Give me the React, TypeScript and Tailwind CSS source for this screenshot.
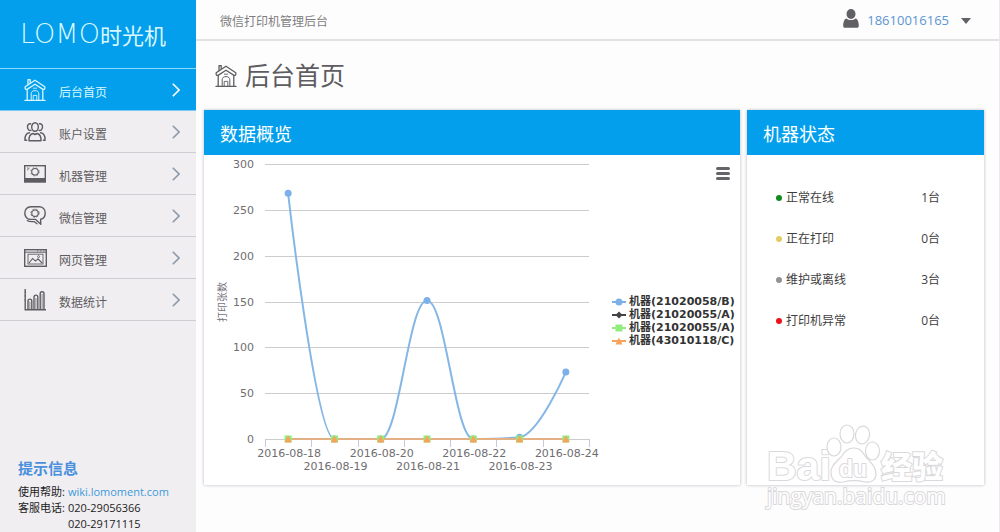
import type { ReactNode } from "react";

type IconProps = { className?: string };

function HomeIcon({ className }: IconProps) {
  return (
    <svg viewBox="0 0 22 24" fill="none" stroke="currentColor" strokeWidth={1.3} strokeLinejoin="round" strokeLinecap="round" className={className}>
      <path d="M4 6.5V1.6h2.2v3" />
      <path d="M11 2.2 1.2 8.8c-.4 1.6.3 2.8 1.8 2.6L11 6.2l8 5.2c1.5.2 2.2-1 1.8-2.6Z" />
      <path d="M3.2 12v10M18.8 12v10M1 22.4h20" />
      <path d="M7.2 22v-6.2c0-2 1.4-3.2 3.8-3.2s3.8 1.2 3.8 3.2V22" strokeWidth={1} />
      <path d="M9.2 22v-4.6h3.6V22M9.4 10.2h3.2" strokeWidth={0.9} />
    </svg>
  );
}

function UsersIcon({ className }: IconProps) {
  return (
    <svg viewBox="0 0 22 20" fill="none" stroke="currentColor" strokeWidth={1.4} strokeLinecap="round" strokeLinejoin="round" className={className}>
      <ellipse cx="11" cy="5" rx="3.3" ry="4.2" />
      <path d="M6.6 1.8C4.6 1.4 3.4 3 3.5 5c.1 2.2 1.6 3.8 3.5 3.4M15.4 1.8c2-.4 3.2 1.2 3.1 3.2-.1 2.2-1.6 3.8-3.5 3.4" />
      <path d="M5 18.8c-.2-4.2 1.4-6.8 4-7.3l2 1 2-1c2.6.5 4.2 3.1 4 7.3Z" />
      <path d="M5.4 10.8C2.4 11.2.8 13.8.9 18.2h1.8M16.6 10.8c3 .4 4.6 3 4.5 7.4h-1.8" />
    </svg>
  );
}

function MachineIcon({ className }: IconProps) {
  return (
    <svg viewBox="0 0 22 18" fill="none" stroke="currentColor" className={className}>
      <rect x=".7" y=".7" width="20.6" height="16.3" strokeWidth={1.4} />
      <rect x="1" y="13" width="20" height="4" fill="currentColor" stroke="none" />
      <circle cx="11" cy="6.8" r="3.3" strokeWidth={1.1} />
      <circle cx="11" cy="6.8" r="4.2" strokeWidth={0.8} strokeDasharray="1.4 2" />
      <path d="M3 5.2 5.600 3M3 3h1.500" strokeWidth={0.8} />
    </svg>
  );
}

function WechatIcon({ className }: IconProps) {
  return (
    <svg viewBox="0 0 22 20" fill="none" stroke="currentColor" strokeLinejoin="round" strokeLinecap="round" className={className}>
      <path d="M7 .8h8c3.8 0 6.2 2.600 6.200 6.200 0 3.400-2 5.800-4.600 6.300l.2 5-5.200-4.900H7C3.200 13.400.8 10.800.8 7.200.8 3.400 3.200.8 7 .8Z" strokeWidth={1.4} />
      <path d="M3.2 14.600c2.600 1.600 5 1 6.800 1l3 2.200" strokeWidth={1.2} />
      <circle cx="11" cy="7.2" r="3.2" strokeWidth={1.1} />
      <circle cx="11" cy="7.2" r="4.1" strokeWidth={0.8} strokeDasharray="1.3 2" />
    </svg>
  );
}

function WebIcon({ className }: IconProps) {
  return (
    <svg viewBox="0 0 23 18" fill="none" stroke="currentColor" className={className}>
      <rect x=".7" y=".7" width="21.6" height="16.6" strokeWidth={1.4} />
      <path d="M1 3.2h21" strokeWidth={1} />
      <path d="M13 2h1.500M16 2h1.500M19 2h1.500" strokeWidth={0.8} />
      <rect x="4" y="5.2" width="15" height="9.8" strokeWidth={0.9} />
      <path d="m5 14 3.600-4.500 3 2.600L14 9.800l4 4.200" strokeWidth={1.1} />
      <circle cx="14.6" cy="7.6" r="1" strokeWidth={0.8} />
    </svg>
  );
}

function StatsIcon({ className }: IconProps) {
  return (
    <svg viewBox="0 0 22 22" fill="none" stroke="currentColor" strokeWidth={1.4} className={className}>
      <path d="M1.200 0v20.800H22" />
      <path d="M.4 3h1.600M.4 7h1.600M.4 11h1.600" strokeWidth={0.8} />
      <path d="M4 20.500V12a1.900 1.900 0 0 1 3.800 0v8.500M10 20.500V8a1.900 1.900 0 0 1 3.800 0v12.500M16.200 20.500V4.600a1.900 1.900 0 0 1 3.800 0v15.900" />
      <path d="M5.900 12.500v8M11.900 9v11.500M18.100 5v15.500" strokeWidth={0.7} />
    </svg>
  );
}

function Chevron() {
  return (
    <svg viewBox="0 0 8 14" fill="none" stroke="currentColor" strokeWidth={1.6} className="h-3.5 w-2">
      <path d="m.8.8 6.200 6.200-6.200 6.200" />
    </svg>
  );
}

const navItems = [
  { label: "后台首页", icon: <HomeIcon className="h-6 w-[22px]" />, active: true },
  { label: "账户设置", icon: <UsersIcon className="h-5 w-[22px]" /> },
  { label: "机器管理", icon: <MachineIcon className="h-[18px] w-[22px]" /> },
  { label: "微信管理", icon: <WechatIcon className="h-5 w-[22px]" /> },
  { label: "网页管理", icon: <WebIcon className="h-[18px] w-[23px]" /> },
  { label: "数据统计", icon: <StatsIcon className="h-[22px] w-[22px]" /> },
];

function Sidebar() {
  return (
    <aside className="flex min-h-screen w-[196px] shrink-0 flex-col bg-[#f0eef1]">
      <div className="flex h-[69px] items-center border-b border-[#8ddcfb] bg-[#049fec] pl-5 text-[#d9f7ff]">
        <span className="font-['DejaVu_Sans',sans-serif] text-[27px] font-extralight">LOMO</span>
        <span className="font-['Noto_Sans_CJK_SC',sans-serif] text-[22px]">时光机</span>
      </div>
      <nav>
        {navItems.map((item) => (
          <a
            key={item.label}
            href="#"
            className={
              item.active
                ? "flex h-[42px] items-center border-b border-[#7cc8ee] bg-[#049fec] pr-4 pl-6 text-[#d9f7ff]"
                : "flex h-[42px] items-center border-b border-[#cfcdd1] pr-4 pl-6 text-[#5e5c60]"
            }
          >
            <span className="w-[35px]">{item.icon}</span>
            <span className="flex-1 pt-1.5 text-[12px]">{item.label}</span>
            <span className={item.active ? "text-white" : "text-[#8c99a8]"}>
              <Chevron />
            </span>
          </a>
        ))}
      </nav>

      <div className="mt-auto pl-[18px] text-[#222]">
        <h2 className="mb-1.5 text-[15px] leading-5 font-bold text-[#4a90dd]">提示信息</h2>
        <dl className="grid grid-cols-[auto_1fr] gap-x-[3px] text-[11px] leading-4">
          <dt>使用帮助:</dt>
          <dd>
            <a href="http://wiki.lomoment.com" className="text-[#3c9bdc]">wiki.lomoment.com</a>
          </dd>
          <dt>客服电话:</dt>
          <dd>
            020-29056366
            <br />
            020-29171115
          </dd>
        </dl>
      </div>
    </aside>
  );
}

const days = ["2016-08-18", "2016-08-19", "2016-08-20", "2016-08-21", "2016-08-22", "2016-08-23", "2016-08-24"];
const prints = [268, 0, 0, 151, 0, 2, 73];
const yTicks = [0, 50, 100, 150, 200, 250, 300];

const LEFT = 61;
const RIGHT = 385;
const TOP = 9;
const BOTTOM = 284;
const STEP = (RIGHT - LEFT) / days.length;

const xAt = (i: number) => LEFT + STEP * (i + 0.5);
const yAt = (v: number) => BOTTOM - (v / 300) * (BOTTOM - TOP);

// Smoothed line whose control points never overshoot the neighbouring values
function spline(values: number[]) {
  const pts = values.map((v, i) => ({ x: xAt(i), y: yAt(v) }));
  let d = `M${pts[0].x} ${pts[0].y}`;
  let out = pts[0];
  for (let i = 1; i < pts.length; i++) {
    const prev = pts[i - 1];
    const cur = pts[i];
    const next = pts[i + 1];
    let left = cur;
    let right = cur;
    if (next) {
      left = { x: (1.5 * cur.x + prev.x) / 2.5, y: (1.5 * cur.y + prev.y) / 2.5 };
      right = { x: (1.5 * cur.x + next.x) / 2.5, y: (1.5 * cur.y + next.y) / 2.5 };
      const fix = ((right.y - left.y) * (right.x - cur.x)) / (right.x - left.x) + cur.y - right.y;
      left.y += fix;
      right.y += fix;
      const lo = Math.min(prev.y, cur.y);
      const hi = Math.max(prev.y, cur.y);
      left.y = Math.min(hi, Math.max(lo, left.y));
      right.y = 2 * cur.y - left.y;
      const nlo = Math.min(next.y, cur.y);
      const nhi = Math.max(next.y, cur.y);
      right.y = Math.min(nhi, Math.max(nlo, right.y));
      left.y = 2 * cur.y - right.y;
    }
    d += ` C${out.x} ${out.y} ${left.x} ${left.y} ${cur.x} ${cur.y}`;
    out = right;
  }
  return d;
}

function PrintChart() {
  return (
    <svg viewBox="0 0 400 330" className="block min-w-0 flex-1 font-['DejaVu_Sans','Noto_Sans_CJK_SC',sans-serif]">
      {yTicks.map((v) => (
        <g key={v}>
          <line x1={LEFT} x2={RIGHT} y1={Math.round(yAt(v)) + 0.5} y2={Math.round(yAt(v)) + 0.5} stroke="#cccccf" />
          <text x="50" y={yAt(v) + 4} textAnchor="end" fontSize="11" fill="#6f6d70">{v}</text>
        </g>
      ))}
      {[0, 1, 2, 3, 4, 5, 6, 7].map((i) => (
        <line key={i} x1={Math.round(LEFT + STEP * i) + 0.5} x2={Math.round(LEFT + STEP * i) + 0.5} y1={BOTTOM} y2={BOTTOM + 8} stroke="#c3ccd8" />
      ))}
      {days.map((day, i) => (
        <text key={day} x={xAt(i) + 1} y={i % 2 ? 315 : 302} textAnchor="middle" fontSize="11" fill="#6f6d70">{day}</text>
      ))}
      <text transform="translate(22 147) rotate(-90)" textAnchor="middle" fontSize="10" fill="#77717c">打印张数</text>

      <path d={spline(prints)} fill="none" stroke="#85b7e6" strokeWidth={2} />
      {prints.map((v, i) => (
        <circle key={i} cx={xAt(i)} cy={yAt(v)} r={3.5} fill="#7cb0e8" />
      ))}
      <line x1={xAt(0)} x2={xAt(6)} y1={BOTTOM} y2={BOTTOM} stroke="#e4b083" strokeWidth={2} />
      {days.map((day, i) => (
        <g key={day} transform={`translate(${xAt(i)} ${BOTTOM})`}>
          <rect x="-3.5" y="-3.5" width="7" height="7" fill="#90ed7d" />
          <path d="M0-3 3 3h-6Z" fill="#f7a35c" stroke="#f7a35c" />
        </g>
      ))}
    </svg>
  );
}

const series: { name: string; color: string; mark: ReactNode }[] = [
  { name: "机器(21020058/B)", color: "#7cb0e8", mark: <circle cx="7" cy="5" r="3.5" /> },
  { name: "机器(21020055/A)", color: "#434348", mark: <path d="M7 1.500 10.500 5 7 8.500 3.500 5Z" /> },
  { name: "机器(21020055/A)", color: "#90ed7d", mark: <path d="M3.500 1.500h7v7h-7Z" /> },
  { name: "机器(43010118/C)", color: "#f7a35c", mark: <path d="m7 1.500 3.500 7h-7Z" /> },
];

function OverviewPanel() {
  return (
    <section className="bg-white shadow-[0_0_3px_#b9b3bd]">
      <h2 className="flex h-[45px] items-center bg-[#049fec] px-4 pt-1 text-[18px] text-white">数据概览</h2>
      <div className="flex">
        <PrintChart />
        <div className="flex w-[136px] shrink-0 flex-col pr-2 pl-2">
          <button type="button" aria-label="图表菜单" className="mt-3 mr-0.5 flex flex-col gap-0.5 self-end">
            <span className="h-[3px] w-3.5 rounded-xs bg-[#666469]" />
            <span className="h-[3px] w-3.5 rounded-xs bg-[#666469]" />
            <span className="h-[3px] w-3.5 rounded-xs bg-[#666469]" />
          </button>
          <ul className="mt-[115px]">
            {series.map((s, i) => (
              <li key={i} className="h-[13px]">
                <button
                  type="button"
                  className="flex items-center gap-[3px] font-['DejaVu_Sans','Noto_Sans_CJK_SC',sans-serif] text-[11px] leading-[13px] font-bold whitespace-nowrap text-[#333]"
                >
                  <svg viewBox="0 0 14 10" fill={s.color} stroke="none" className="h-2.5 w-3.5">
                    <path d="M0 5h14" stroke={s.color} strokeWidth={2} />
                    {s.mark}
                  </svg>
                  {s.name}
                </button>
              </li>
            ))}
          </ul>
        </div>
      </div>
    </section>
  );
}

const statuses = [
  { label: "正常在线", count: "1台", dot: "bg-[#138a1c]" },
  { label: "正在打印", count: "0台", dot: "bg-[#e3cd63]" },
  { label: "维护或离线", count: "3台", dot: "bg-[#939196]" },
  { label: "打印机异常", count: "0台", dot: "bg-[#ee1216]" },
];

function StatusPanel() {
  return (
    <section className="bg-white shadow-[0_0_3px_#b9b3bd]">
      <h2 className="flex h-[45px] items-center bg-[#049fec] px-4 pt-1 text-[18px] text-white">机器状态</h2>
      <ul className="pt-[22px] pr-11 pl-[29px] text-[12px] text-[#3f3d40]">
        {statuses.map((s) => (
          <li key={s.label} className="flex h-[41px] items-center">
            <span className={`mr-1 size-1.5 rounded-full ${s.dot}`} />
            <span className="flex-1">{s.label}</span>
            <span>{s.count}</span>
          </li>
        ))}
      </ul>
    </section>
  );
}

function Watermark() {
  return (
    <svg viewBox="0 0 184 92" className="pointer-events-none absolute right-[51px] bottom-[20px] w-[184px]" fill="#fff" stroke="#dad8db" strokeWidth={1.2}>
      <g className="font-['Liberation_Sans',sans-serif]" strokeLinejoin="round">
        <text x="3" y="60" fontSize="41" fontWeight="700" strokeWidth="2" paintOrder="stroke">Bai</text>
        <ellipse cx="70" cy="27" rx="7" ry="9" />
        <ellipse cx="83" cy="14" rx="7" ry="9" />
        <ellipse cx="98.5" cy="15" rx="7" ry="9" transform="rotate(10 98.5 15)" />
        <ellipse cx="108.5" cy="31" rx="7" ry="9" />
        <path d="M90 28c-8 0-10 6-14 10-5 5-10 9-9 16 1 8 7 9 12 8 8-2 14-2 22 0 6 1 11-2 11-8 0-7-5-11-10-17-4-5-5-9-12-9Z" />
        <text x="75" y="57" fontSize="23" fontWeight="700" strokeWidth="2" paintOrder="stroke">du</text>
      </g>
      <text x="117" y="58" fontSize="31" fontWeight="900" strokeWidth="2" paintOrder="stroke" className="font-['Noto_Sans_CJK_SC',sans-serif]">经验</text>
      <text x="3" y="84" fontSize="21" strokeWidth="2" paintOrder="stroke" className="font-['Open_Sans',sans-serif]">jingyan.baidu.com</text>
    </svg>
  );
}

export default function App() {
  return (
    <div className="flex min-h-screen bg-[#fdfdfd] font-['Open_Sans','Noto_Sans_CJK_SC',sans-serif]">
      <Sidebar />
      <main className="relative min-w-0 flex-1 border-r border-[#ece8ee]">
        <header className="flex h-[41px] items-center border-b-2 border-[#e2e1e3] pr-7 pl-6">
          <p className="flex-1 pt-1 text-[12px] text-[#7f7d81]">微信打印机管理后台</p>
          <button type="button" className="flex items-center pt-0.5 text-[13px] text-[#5b95d2]">
            <svg viewBox="0 0 16 19" fill="#626064" className="mr-2 mb-1 h-[19px] w-4">
              <ellipse cx="8" cy="5" rx="4.5" ry="5" />
              <path d="M3.500 9.500c2.600 2 6.400 2 9 0 2.200.5 3.300 3.500 3.300 7.500 0 1.200-.6 1.800-1.800 1.800H2c-1.200 0-1.800-.6-1.800-1.800 0-4 1.100-7 3.300-7.500Z" />
            </svg>
            18610016165
            <svg viewBox="0 0 10 6" fill="#626064" className="ml-3 h-1.5 w-2.5">
              <path d="M0 0h10L5 6Z" />
            </svg>
          </button>
        </header>

        <h1 className="flex h-[69px] items-center gap-2 pl-[19px] text-[25px] text-[#5e5c60]">
          <HomeIcon className="h-6 w-[22px]" />
          后台首页
        </h1>

        <div className="grid grid-cols-[minmax(0,1fr)_237px] gap-[7px] pr-[15px] pl-2">
          <OverviewPanel />
          <StatusPanel />
        </div>
        <Watermark />
      </main>
    </div>
  );
}
